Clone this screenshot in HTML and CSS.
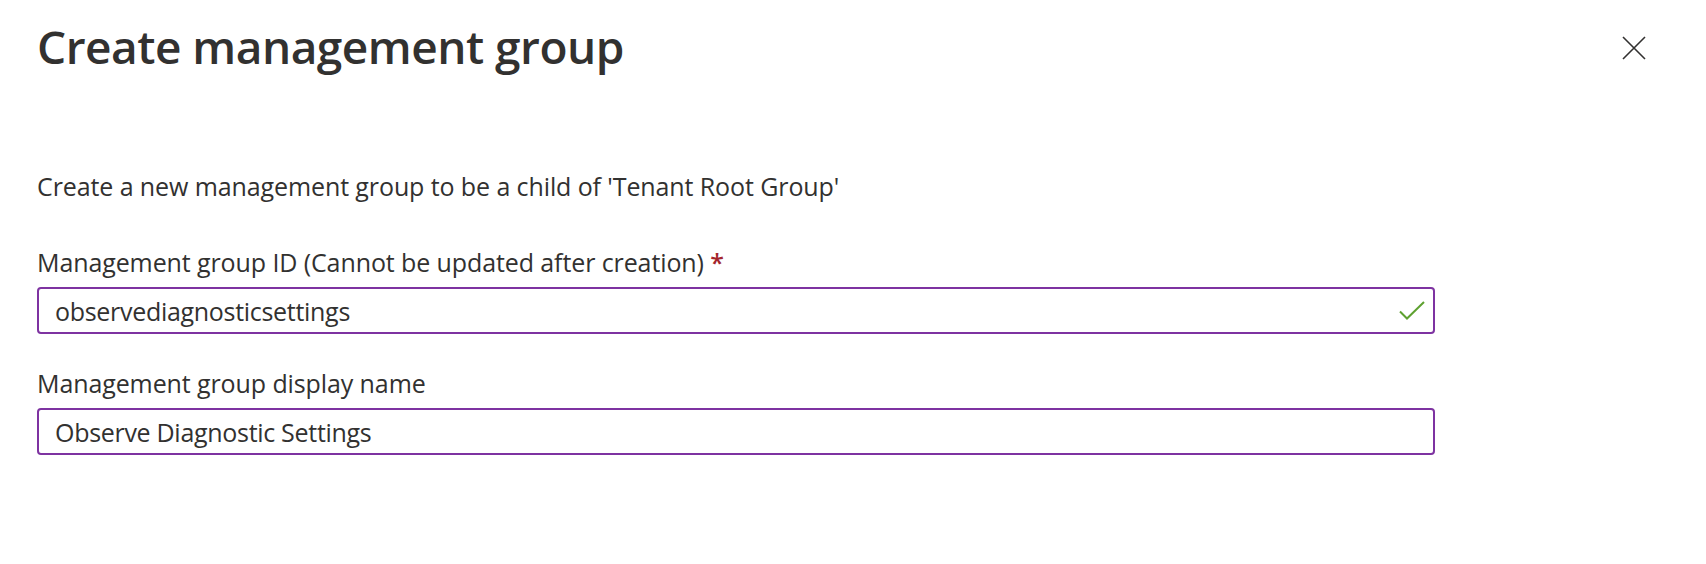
FILE: index.html
```html
<!DOCTYPE html>
<html lang="en">
<head>
<meta charset="utf-8">
<title>Create management group</title>
<link rel="stylesheet" href="styles.css">
</head>
<body>
<div class="panel">
  <header class="panel-header">
    <h1 class="panel-title">Create management group</h1>
    <button class="close-btn" aria-label="Close">
      <svg width="24" height="24" viewBox="0 0 24 24"><path d="M1 1 L23 23 M23 1 L1 23" stroke="#323130" stroke-width="1.6" fill="none"/></svg>
    </button>
  </header>
  <p class="description">Create a new management group to be a child of 'Tenant Root Group'</p>
  <div class="field">
    <label class="field-label">Management group ID (Cannot be updated after creation) <span class="required">*</span></label>
    <div class="input-wrap">
      <input class="text-input" type="text" value="observediagnosticsettings">
      <svg class="valid-icon" width="26" height="20" viewBox="0 0 26 20"><path d="M1 10.5 L8 17.5 L25 1" stroke="#5ea130" stroke-width="2" fill="none"/></svg>
    </div>
  </div>
  <div class="field">
    <label class="field-label">Management group display name</label>
    <div class="input-wrap">
      <input class="text-input" type="text" value="Observe Diagnostic Settings">
    </div>
  </div>
</div>
</body>
</html>
```
FILE: styles.css
```css
html, body {
  margin: 0;
  padding: 0;
  background: #ffffff;
}
body {
  font-family: "Open Sans", "Noto Sans", sans-serif;
  color: #323130;
}
.panel {
  padding: 14px 60px 0 37px;
}
.panel-header {
  display: flex;
  justify-content: space-between;
  align-items: flex-start;
}
.panel-title {
  margin: 0;
  font-size: 46px;
  line-height: 64px;
  font-weight: 600;
  letter-spacing: -0.5px;
  color: #323130;
}
.close-btn {
  margin-top: 22px;
  padding: 0;
  border: 0;
  background: none;
  width: 24px;
  height: 24px;
  display: flex;
}
.description {
  margin: 90px 0 40px;
  font-size: 25px;
  line-height: 36px;
  letter-spacing: -0.1px;
}
.field {
  width: 1398px;
  margin-bottom: 31px;
}
.field-label {
  display: block;
  font-size: 25px;
  line-height: 36px;
  letter-spacing: -0.1px;
  margin-bottom: 7px;
}
.required {
  color: #a4262c;
  font-weight: 600;
}
.input-wrap {
  position: relative;
}
.text-input {
  display: block;
  box-sizing: border-box;
  width: 100%;
  height: 47px;
  padding: 0 16px;
  border: 2px solid #7e33a1;
  border-radius: 4px;
  font-family: "Open Sans", "Noto Sans", sans-serif;
  font-size: 25px;
  letter-spacing: -0.3px;
  color: #323130;
  background: #fff;
  outline: none;
}
.valid-icon {
  position: absolute;
  right: 10px;
  top: 14px;
}
```
